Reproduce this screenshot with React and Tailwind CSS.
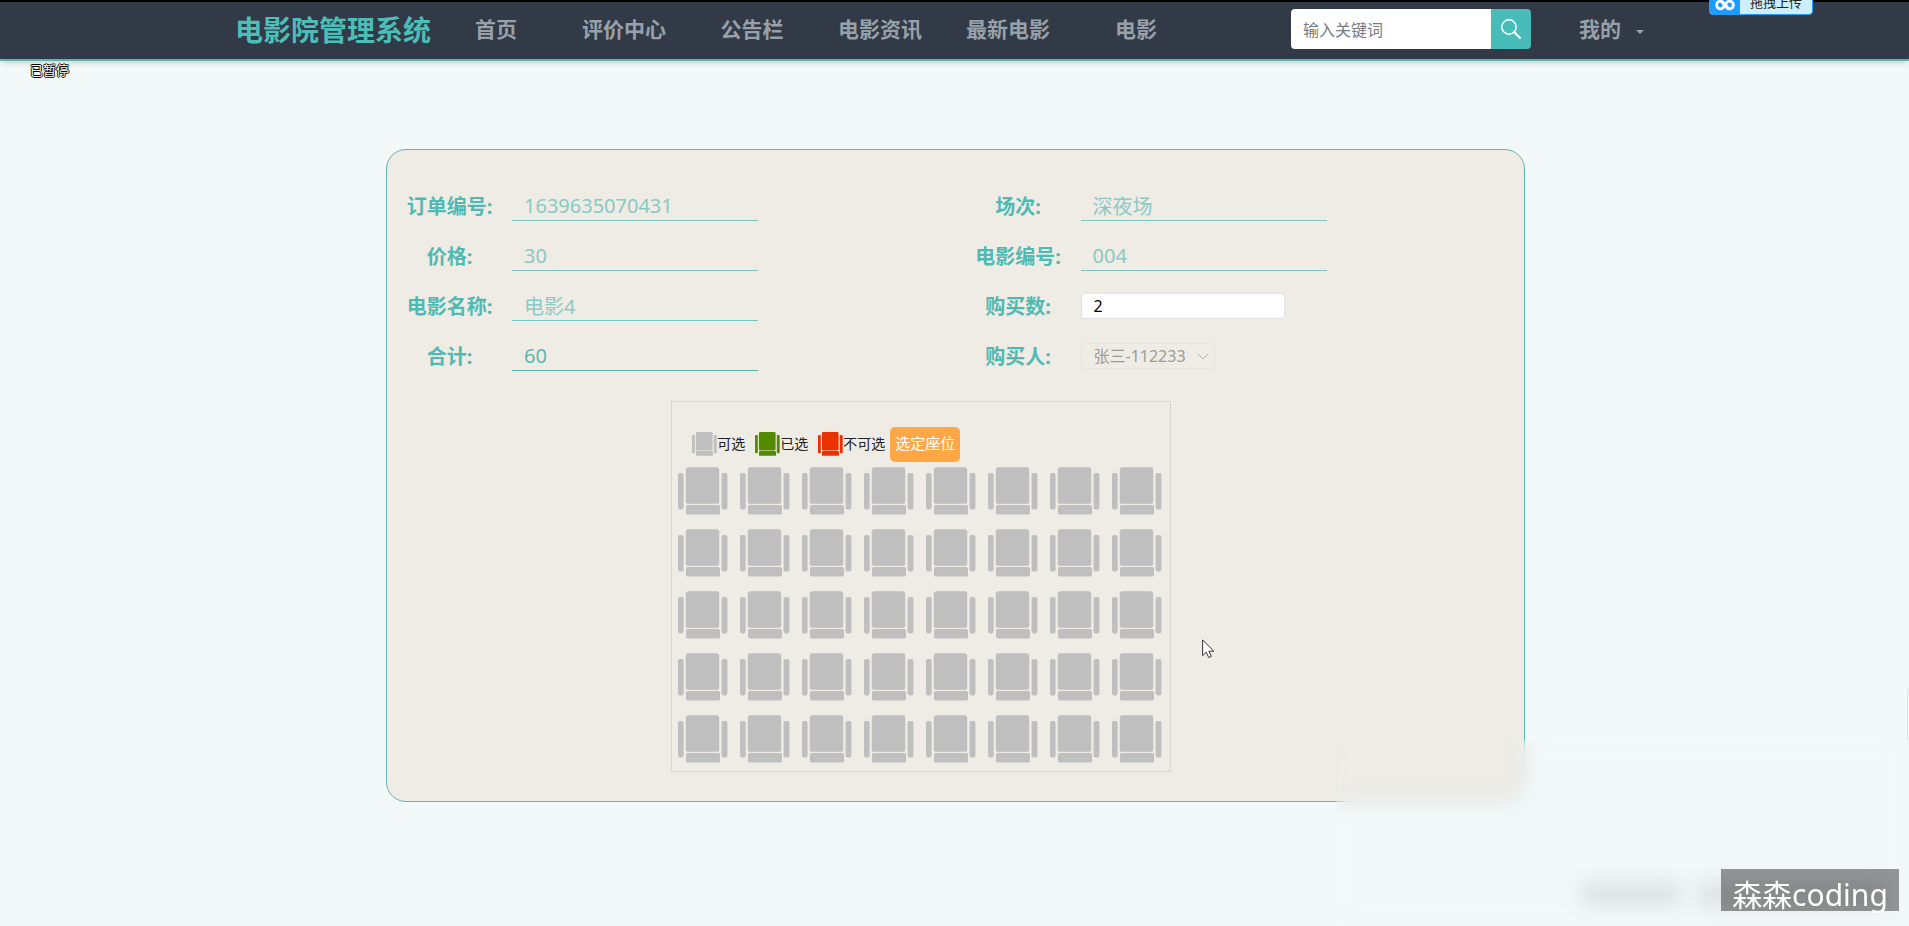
import React, { useState } from "react";

const NAV_ITEMS = [
  { label: "首页", width: "w-[108px]" },
  { label: "评价中心", width: "w-[148px]" },
  { label: "公告栏", width: "w-[108px]" },
  { label: "电影资讯", width: "w-[148px]" },
  { label: "最新电影", width: "w-[108px]" },
  { label: "电影", width: "w-[148px]" },
];

const SEATS = Array.from({ length: 40 }, (_, i) => i + 1);

function SeatIcon({ className }) {
  return (
    <svg viewBox="0 0 50 48" preserveAspectRatio="xMidYMin meet" className={className} fill="currentColor" aria-hidden="true">
      <rect x="0" y="6" width="5.6" height="36.4" rx="1.8" />
      <rect x="7.8" y="0.2" width="33.4" height="36.6" rx="2.6" />
      <rect x="8" y="38" width="34" height="9.6" rx="1.8" />
      <rect x="43.6" y="6" width="5.8" height="36.4" rx="1.8" />
    </svg>
  );
}

function Row({ id, label, children }) {
  return (
    <div className="flex h-[50px] items-center">
      <label htmlFor={id} className="w-[125px] shrink-0 pt-px text-center text-xl font-bold text-[#4fbab3]">
        {label}
      </label>
      {children}
    </div>
  );
}

function LineInput({ id, value, muted }) {
  return (
    <input
      id={id}
      type="text"
      readOnly
      value={value}
      className={
        "h-[30px] w-[246px] border-b bg-transparent px-3 text-xl outline-none " +
        (muted ? "border-[#7cc5bf] text-[#88cac4]" : "border-[#57b9b2] text-[#57b9b2]")
      }
    />
  );
}

function Legend({ color, children }) {
  return (
    <span className="flex items-center">
      <SeatIcon className={"h-6 w-[25px] " + color} />
      {children}
    </span>
  );
}

function Header() {
  return (
    <header className="relative h-[61px] border-t-2 border-b-2 border-t-black border-b-[#5cb5b1] bg-[#313a46] shadow-md">
      <div className="flex h-full items-center pb-[3px] pl-[235px]">
        <a href="#home" className="w-[196px] whitespace-nowrap pt-[2px] text-[28px] font-bold text-[#4dbdb8]">
          电影院管理系统
        </a>
        <nav className="ml-[11px] flex pt-[2px] text-[21px] font-bold text-[#98a0aa]">
          {NAV_ITEMS.map((item) => (
            <a
              key={item.label}
              href={"#" + item.label}
              className={"shrink-0 whitespace-nowrap text-center " + item.width}
            >
              {item.label}
            </a>
          ))}
        </nav>
        <form className="ml-[81px] flex h-10" onSubmit={(e) => e.preventDefault()}>
          <input
            type="text"
            aria-label="输入关键词"
            placeholder="输入关键词"
            className="w-[200px] rounded-l bg-white px-3 pt-[2px] text-base outline-none placeholder:text-[#767c84]"
          />
          <button
            type="submit"
            aria-label="搜索"
            className="flex w-10 items-center justify-center rounded-r bg-[#48bcb8] text-white"
          >
            <svg viewBox="0 0 20 20" className="h-5 w-5" fill="none" stroke="currentColor" aria-hidden="true">
              <circle cx="8" cy="8" r="7.2" strokeWidth="1.4" />
              <path d="M13.4 13.4L19 19" strokeWidth="2.2" strokeLinecap="round" />
            </svg>
          </button>
        </form>
        <a href="#mine" className="ml-[48px] flex items-center whitespace-nowrap pt-[2px] text-[21px] font-bold text-[#98a0aa]">
          我的
          <svg viewBox="0 0 8 4" className="mt-1 ml-[15px] h-1 w-2" fill="currentColor" aria-hidden="true">
            <path d="M0 0h8L4 4z" />
          </svg>
        </a>
      </div>
      <button
        type="button"
        className="absolute -top-[14px] right-24 flex h-[27px] w-[104px] overflow-hidden rounded border border-[#1e9bff] bg-[#cdeffd] text-[13px] text-[#222]"
      >
        <span className="flex h-full w-[30px] items-center justify-center bg-[#1e9bff] text-white">
          <svg viewBox="0 0 20 14" className="mt-1 h-[14px] w-5" fill="none" stroke="currentColor" strokeWidth="2.8" aria-hidden="true">
            <circle cx="5.4" cy="8" r="3.8" />
            <circle cx="14.6" cy="8" r="3.8" />
            <path d="M6 4L14 12" />
          </svg>
        </span>
        <span className="flex-1 pt-[3px] text-center leading-5">拖拽上传</span>
      </button>
    </header>
  );
}

export default function App() {
  const [chosen, setChosen] = useState([]);
  const toggle = (n) =>
    setChosen((list) => (list.includes(n) ? list.filter((v) => v !== n) : [...list, n]));

  return (
    <div className="relative min-h-screen overflow-hidden bg-[#f3f9f9] font-['Noto_Sans','Noto_Sans_CJK_SC',sans-serif]">
      <Header />
      <p className="absolute top-[60px] left-[30px] text-[13px] leading-5 text-white [text-shadow:1px_0_0_#000,-1px_0_0_#000,0_1px_0_#000,0_-1px_0_#000]">
        已暂停
      </p>

      <main className="pt-[88px] pl-[2px]">
        <section className="mx-auto max-w-[1139px] rounded-[20px] border border-[#5cb8b3] bg-[#efebe5] pt-[31px] pb-[29px]">
          <div className="grid grid-cols-2">
            <Row id="order" label="订单编号:"><LineInput id="order" value="1639635070431" muted /></Row>
            <Row id="session" label="场次:"><LineInput id="session" value="深夜场" muted /></Row>
            <Row id="price" label="价格:"><LineInput id="price" value="30" muted /></Row>
            <Row id="movie-no" label="电影编号:"><LineInput id="movie-no" value="004" muted /></Row>
            <Row id="movie" label="电影名称:"><LineInput id="movie" value="电影4" muted /></Row>
            <Row id="count" label="购买数:">
              <input
                id="count"
                type="text"
                defaultValue="2"
                className="h-[26px] w-[204px] rounded border border-[#dfe3e6] bg-white px-3 text-base text-black outline-none"
              />
            </Row>
            <Row id="total" label="合计:"><LineInput id="total" value="60" /></Row>
            <Row id="buyer" label="购买人:">
              <span className="relative">
                <select
                  id="buyer"
                  disabled
                  className="block h-[26px] w-[134px] appearance-none rounded border border-[#e4e3df] bg-transparent pl-3 text-base leading-6 text-[#9d9b96] opacity-100"
                >
                  <option>张三-112233</option>
                </select>
                <svg
                  viewBox="0 0 12 7"
                  className="pointer-events-none absolute top-[10px] right-[6px] h-[7px] w-3 text-[#b3b1ac]"
                  fill="none"
                  stroke="currentColor"
                  aria-hidden="true"
                >
                  <path d="M1 1l5 5 5-5" />
                </svg>
              </span>
            </Row>
          </div>

          <div className="mt-5 ml-[25%] w-[500px] border border-dotted border-[#c4c2be] pt-[25px]">
            <div className="flex h-[34px] items-center gap-[10px] pl-5 text-sm text-[#222]">
              <Legend color="text-[#bfbfbf]">可选</Legend>
              <Legend color="text-[#538a00]">已选</Legend>
              <Legend color="text-[#e83200]">不可选</Legend>
              <button type="button" className="-ml-[5px] h-[35px] w-[70px] rounded-[5px] bg-[#ffa744] text-[15px] text-white">
                选定座位
              </button>
            </div>
            <div className="grid w-[496px] grid-cols-8">
              {SEATS.map((n) => (
                <button
                  key={n}
                  type="button"
                  aria-label={"座位" + n}
                  onClick={() => toggle(n)}
                  className={"p-[6px] " + (chosen.includes(n) ? "text-[#538a00]" : "text-[#bfbfbf]")}
                >
                  <SeatIcon className="h-[50px] w-[50px]" />
                </button>
              ))}
            </div>
          </div>
        </section>
      </main>

      <div className="absolute top-[688px] right-0 h-[52px] w-[2px] rounded-tl-sm border-l border-[#dfe4e4]" />
      <div className="absolute top-[740px] right-0 bottom-0 left-[70%] backdrop-blur-[10px]" />
      <div className="absolute right-[228px] bottom-[20px] h-[24px] w-[100px] bg-[#dde1e1] blur-[10px]" />
      <div className="absolute right-[20px] bottom-[18px] h-[26px] w-[192px] bg-[#dde1e1] blur-[10px]" />
      <div className="absolute right-[10px] bottom-[15px] h-[42px] w-[178px] bg-black/40 pt-[5px] text-center text-[30px] leading-[42px] text-white">
        森森coding
      </div>

      <svg
        viewBox="0 0 13 20"
        className="absolute top-[639px] left-[1202px] h-5 w-[13px]"
        fill="white"
        stroke="#333"
        strokeLinejoin="round"
        aria-hidden="true"
      >
        <path d="M.6 1v15.6l3.6-3.4 2.6 5.4 2.6-1.2-2.5-5.2h5z" />
      </svg>
    </div>
  );
}
